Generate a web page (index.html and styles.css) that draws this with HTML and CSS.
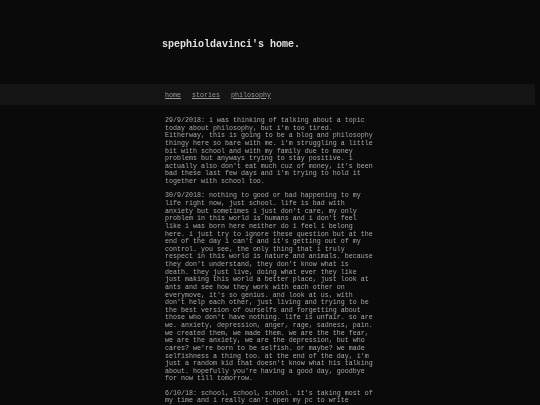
FILE: index.html
```html
<!DOCTYPE html>
<html>
<head>
<meta charset="utf-8">
<title>spephioldavinci's home.</title>
<link rel="stylesheet" href="styles.css">
</head>
<body>
<div class="page">
<header class="top">
  <h1 class="title">spephioldavinci's home.</h1>
</header>
<nav class="bar">
  <a class="link" href="#">home</a>
  <a class="link" href="#">stories</a>
  <a class="link" href="#">philosophy</a>
</nav>
<main class="content">
  <p class="entry">29/9/2018: i was thinking of talking about a topic today about philosophy, but i'm too tired. Eitherway, this is going to be a blog and philosophy thingy here so bare with me. i'm struggling a little bit with school and with my family due to money problems but anyways trying to stay positive. i actually also don't eat much cuz of money, it's been bad these last few days and i'm trying to hold it together with school too.</p>
  <p class="entry">30/9/2018: nothing to good or bad happening to my life right now, just school. life is bad with anxiety but sometimes i just don't care, my only problem in this world is humans and i don't feel like i was born here neither do i feel i belong here. i just try to ignore these question but at the end of the day i can't and it's getting out of my control. you see, the only thing that i truly respect in this world is nature and animals. because they don't understand, they don't know what is death. they just live, doing what ever they like just making this world a better place, just look at ants and see how they work with each other on everymove, it's so genius. and look at us, with don't help each other, just living and trying to be the best version of ourselfs and forgetting about those who don't have nothing. life is unfair. so are we. anxiety, depression, anger, rage, sadness, pain. we created them, we made them. we are the the fear, we are the anxiety, we are the depression, but who cares? we're born to be selfish. or maybe? we made selfishness a thing too. at the end of the day, i'm just a random kid that doesn't know what his talking about. hopefully you're having a good day, goodbye for now till tomorrow.</p>
  <p class="entry">6/10/18: school, school, school. it's taking most of my time and i really can't open my pc to write anything and i will try to write at the end of the week when i have more time.</p>
</main>
</div>
</body>
</html>
```

FILE: styles.css
```css
html, body {
  margin: 0;
  padding: 0;
  background: #0a0a0a;
}

body {
  font-family: "Liberation Mono", "Courier New", monospace;
  color: #a6a6a6;
}

.page {
  filter: grayscale(1);
  background: #0a0a0a;
}

.top {
  height: 84px;
  box-sizing: border-box;
  padding: 39px 0 0 162px;
}

.title {
  margin: 0;
  font-size: 10px;
  font-weight: bold;
  line-height: 12px;
  color: #e0e0e0;
}

.bar {
  width: 535px;
  height: 21px;
  box-sizing: border-box;
  background: #141414;
  padding-left: 165px;
  display: flex;
  align-items: center;
  gap: 11px;
}

.link {
  font-size: 6.667px;
  color: #9a9a9a;
  text-decoration: underline;
}

.content {
  width: 209px;
  padding: 12px 0 0 165px;
}

.entry {
  margin: 0 0 6.8px;
  font-size: 6.667px;
  line-height: 7.62px;
}
```
